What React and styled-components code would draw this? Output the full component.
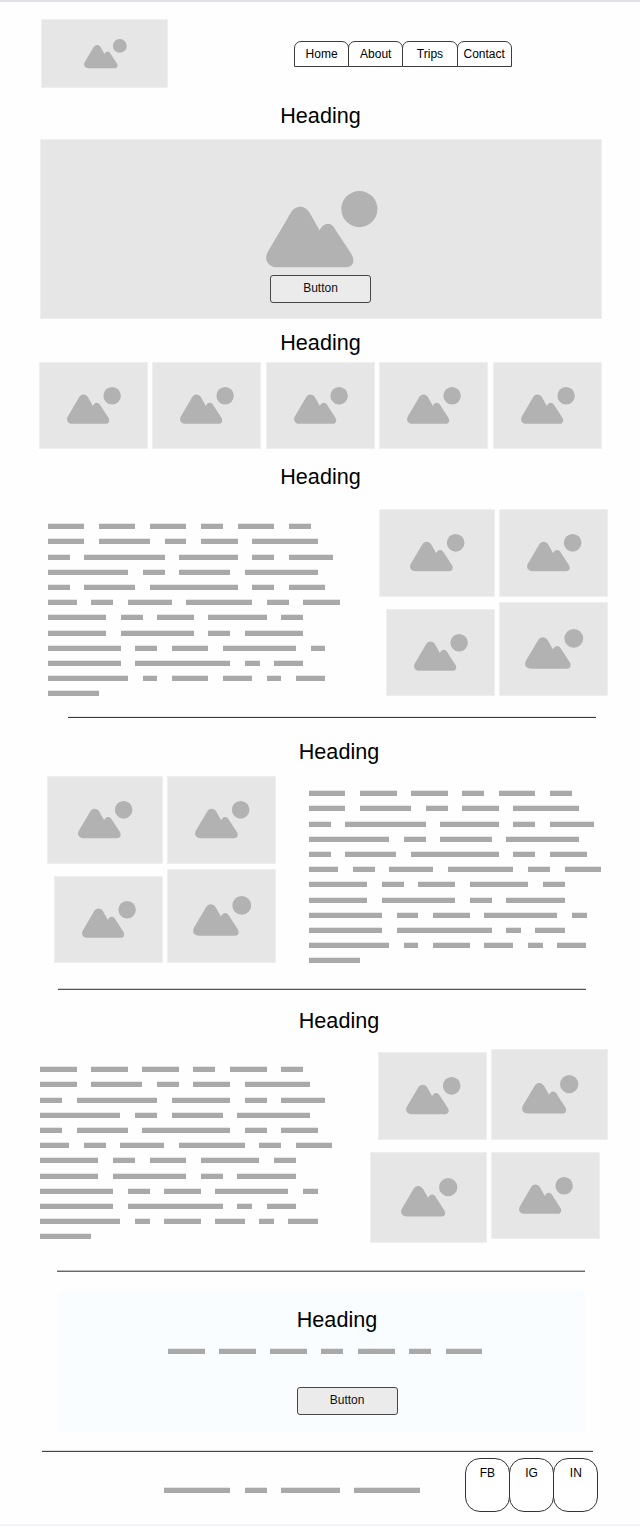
import React from 'react';
import styled, { createGlobalStyle } from 'styled-components';

const CHAR = 7.31;

const GlobalStyle = createGlobalStyle`
  *, *::before, *::after { box-sizing: border-box; }
  body {
    margin: 0;
    background: #fff;
    color: #000;
    font-family: "Liberation Sans", Arial, sans-serif;
  }
`;

const Page = styled.div`
  width: 640px;
  height: 1526px;
  display: flex;
  flex-direction: column;
  background: #fefefe;
  border-top: 2px solid #e1e0e6;
  border-bottom: 2px solid #f2f2f7;
`;

const Header = styled.header`
  display: flex;
  align-items: flex-start;
  gap: 126px;
  padding: 17px 0 0 41px;
`;

const Nav = styled.nav`
  display: flex;
  margin-top: 22px;
`;

const Tab = styled.a`
  width: 55.2px;
  height: 26px;
  border: 1px solid #3c3c3c;
  border-radius: 7px 7px 0 0;
  background: #fff;
  font-size: 12px;
  line-height: 24px;
  text-align: center;
  white-space: nowrap;

  & + & { margin-left: -1px; }
`;

const Heading = styled.h2`
  width: 100px;
  margin: ${(p) => p.$top}px 0 0 ${(p) => p.$left}px;
  padding-top: 2px;
  font-size: 21.6px;
  font-weight: 400;
  line-height: 26px;
  text-align: center;
`;

const Placeholder = styled.div`
  flex: none;
  display: flex;
  align-items: center;
  justify-content: center;
  width: ${(p) => p.$w}px;
  height: ${(p) => p.$h}px;
  background: #e6e6e6;
  border: 1px solid #efefef;

  svg {
    display: block;
    height: ${(p) => p.$h * 0.424}px;
    width: auto;
    margin-left: 1px;
    overflow: visible;
    fill: #b2b2b2;
  }
`;

const Hero = styled.section`
  display: grid;
  margin: 10px 0 0 40px;
  width: 562px;

  > * { grid-area: 1 / 1; }
`;

const Button = styled.button`
  width: 101px;
  height: 28px;
  padding: 0 0 2px;
  border: 1px solid #474747;
  border-radius: 3px;
  background: #ebebeb;
  color: #111;
  font: 12px/24px "Liberation Sans", Arial, sans-serif;
  text-align: center;
`;

const HeroButton = styled(Button)`
  align-self: end;
  margin: 0 0 16px 230px;
`;

const Strip = styled.section`
  display: flex;
  gap: 4.5px;
  margin: 6px 0 0 38.9px;
`;

const Feature = styled.section`
  display: flex;
  align-items: flex-start;
  justify-content: space-between;
  margin: ${(p) => p.$top}px ${(p) => p.$right}px 0 ${(p) => p.$left}px;
`;

const Copy = styled.div`
  display: flex;
  flex-direction: column;
  gap: 10.2px;
  margin-bottom: -1px;
  padding-top: ${(p) => p.$top}px;
`;

const Line = styled.div`
  display: flex;
  gap: ${CHAR * 2}px;
`;

const Word = styled.span`
  width: ${(p) => p.$chars * CHAR}px;
  height: 5px;
  background: #a9a9a9;
  box-shadow: 0 -1px 0 #e6e6e6;
`;

const Gallery = styled.div`
  display: flex;
  flex-direction: column;
  gap: ${(p) => p.$gap}px;
`;

const GalleryRow = styled.div`
  display: flex;
  justify-content: flex-end;
  align-items: ${(p) => p.$align || 'flex-end'};
  gap: 4px;
  padding-right: ${(p) => p.$inset || 0}px;
`;

const Divider = styled.hr`
  flex: none;
  width: ${(p) => p.$w}px;
  height: 2px;
  margin: ${(p) => p.$top}px 0 0 ${(p) => p.$left}px;
  border: 0;
  border-top: 1px solid ${(p) => p.$soft};
  border-bottom: 1px solid ${(p) => p.$ink};
`;

const Signup = styled.section`
  width: 526px;
  height: 141px;
  margin: 19px 0 0 59px;
  padding-top: 14px;
  background: #f9fdff;
`;

const SignupLine = styled(Line)`
  margin: 16px 0 33px 109px;
`;

const SignupButton = styled(Button)`
  display: block;
  margin-left: 237.6px;
`;

const Footer = styled.footer`
  display: flex;
  align-items: flex-start;
  justify-content: space-between;
  margin: 6px 41.6px 0 164.4px;
`;

const FooterLine = styled(Line)`
  padding-top: 30px;
`;

const Socials = styled.div`
  display: flex;
`;

const Social = styled.a`
  width: 45.2px;
  height: 54px;
  padding-top: 7px;
  border: 1px solid #333;
  border-radius: 15px;
  background: #fff;
  font-size: 12px;
  line-height: 15px;
  text-align: center;

  & + & { margin-left: -1px; }
`;

const PARAGRAPH = [
  [5, 5, 5, 3, 5, 3],
  [5, 7, 3, 5, 9],
  [3, 11, 8, 3, 6],
  [11, 3, 7, 10],
  [3, 7, 12, 3, 5],
  [4, 3, 6, 9, 3, 5],
  [8, 3, 5, 8, 3],
  [8, 10, 3, 8],
  [10, 3, 5, 10, 2],
  [10, 13, 2, 4],
  [11, 2, 5, 4, 2, 4],
  [7],
];

const words = (counts) => counts.map((n, i) => <Word key={i} $chars={n} />);

function Picture({ w, h }) {
  return (
    <Placeholder $w={w} $h={h}>
      <svg viewBox="0 0 111 76" aria-hidden="true">
        <path d="M24.3 22.3C28.8 13.5 38.6 13.5 43.3 21.3L53.3 39C57 31.6 64.6 29.8 69 38.3L85 62.8C89.4 70 86.5 76 79 76H12C1.5 76-2.2 68 1.7 60.7Z" />
        <circle cx="93" cy="18" r="18" />
      </svg>
    </Placeholder>
  );
}

function Paragraph({ top }) {
  return (
    <Copy $top={top}>
      {PARAGRAPH.map((counts, i) => (
        <Line key={i}>{words(counts)}</Line>
      ))}
    </Copy>
  );
}

function StackedGallery() {
  return (
    <Gallery $gap={5}>
      <GalleryRow>
        <Picture w={116} h={88} />
        <Picture w={109} h={88} />
      </GalleryRow>
      <GalleryRow>
        <Picture w={109} h={87} />
        <Picture w={109} h={94} />
      </GalleryRow>
    </Gallery>
  );
}

export default function App() {
  return (
    <>
      <GlobalStyle />
      <Page>
        <Header>
          <Picture w={127} h={69} />
          <Nav>
            {['Home', 'About', 'Trips', 'Contact'].map((label) => (
              <Tab key={label}>{label}</Tab>
            ))}
          </Nav>
        </Header>

        <Heading $top={13} $left={270.5}>Heading</Heading>
        <Hero>
          <Picture w={562} h={180} />
          <HeroButton>Button</HeroButton>
        </Hero>

        <Heading $top={9} $left={270.5}>Heading</Heading>
        <Strip>
          {[0, 1, 2, 3, 4].map((i) => (
            <Picture key={i} w={109} h={87} />
          ))}
        </Strip>

        <Heading $top={13} $left={270.5}>Heading</Heading>
        <Feature $top={19} $left={47.6} $right={32}>
          <Paragraph top={15.2} />
          <StackedGallery />
        </Feature>
        <Divider $top={20} $left={68} $w={528} $soft="#ededed" $ink="#38383a" />

        <Heading $top={19} $left={289}>Heading</Heading>
        <Feature $top={11} $left={47} $right={38.9}>
          <StackedGallery />
          <Paragraph top={15.2} />
        </Feature>
        <Divider $top={25} $left={58} $w={528} $soft="#cfcfcf" $ink="#555" />

        <Heading $top={16} $left={289}>Heading</Heading>
        <Feature $top={15} $left={40} $right={32}>
          <Paragraph top={18.2} />
          <Gallery $gap={12}>
            <GalleryRow>
              <Picture w={109} h={88} />
              <Picture w={117} h={91} />
            </GalleryRow>
            <GalleryRow $align="flex-start" $inset={8}>
              <Picture w={117} h={91} />
              <Picture w={109} h={87} />
            </GalleryRow>
          </Gallery>
        </Feature>
        <Divider $top={27} $left={57} $w={528} $soft="#b9b9b9" $ink="#686868" />

        <Signup>
          <Heading $top={0} $left={228}>Heading</Heading>
          <SignupLine>{words([5, 5, 5, 3, 5, 3, 5])}</SignupLine>
          <SignupButton>Button</SignupButton>
        </Signup>
        <Divider $top={18} $left={42} $w={551} $soft="#dedede" $ink="#454547" />

        <Footer>
          <FooterLine>{words([9, 3, 8, 9])}</FooterLine>
          <Socials>
            {['FB', 'IG', 'IN'].map((label) => (
              <Social key={label}>{label}</Social>
            ))}
          </Socials>
        </Footer>
      </Page>
    </>
  );
}
